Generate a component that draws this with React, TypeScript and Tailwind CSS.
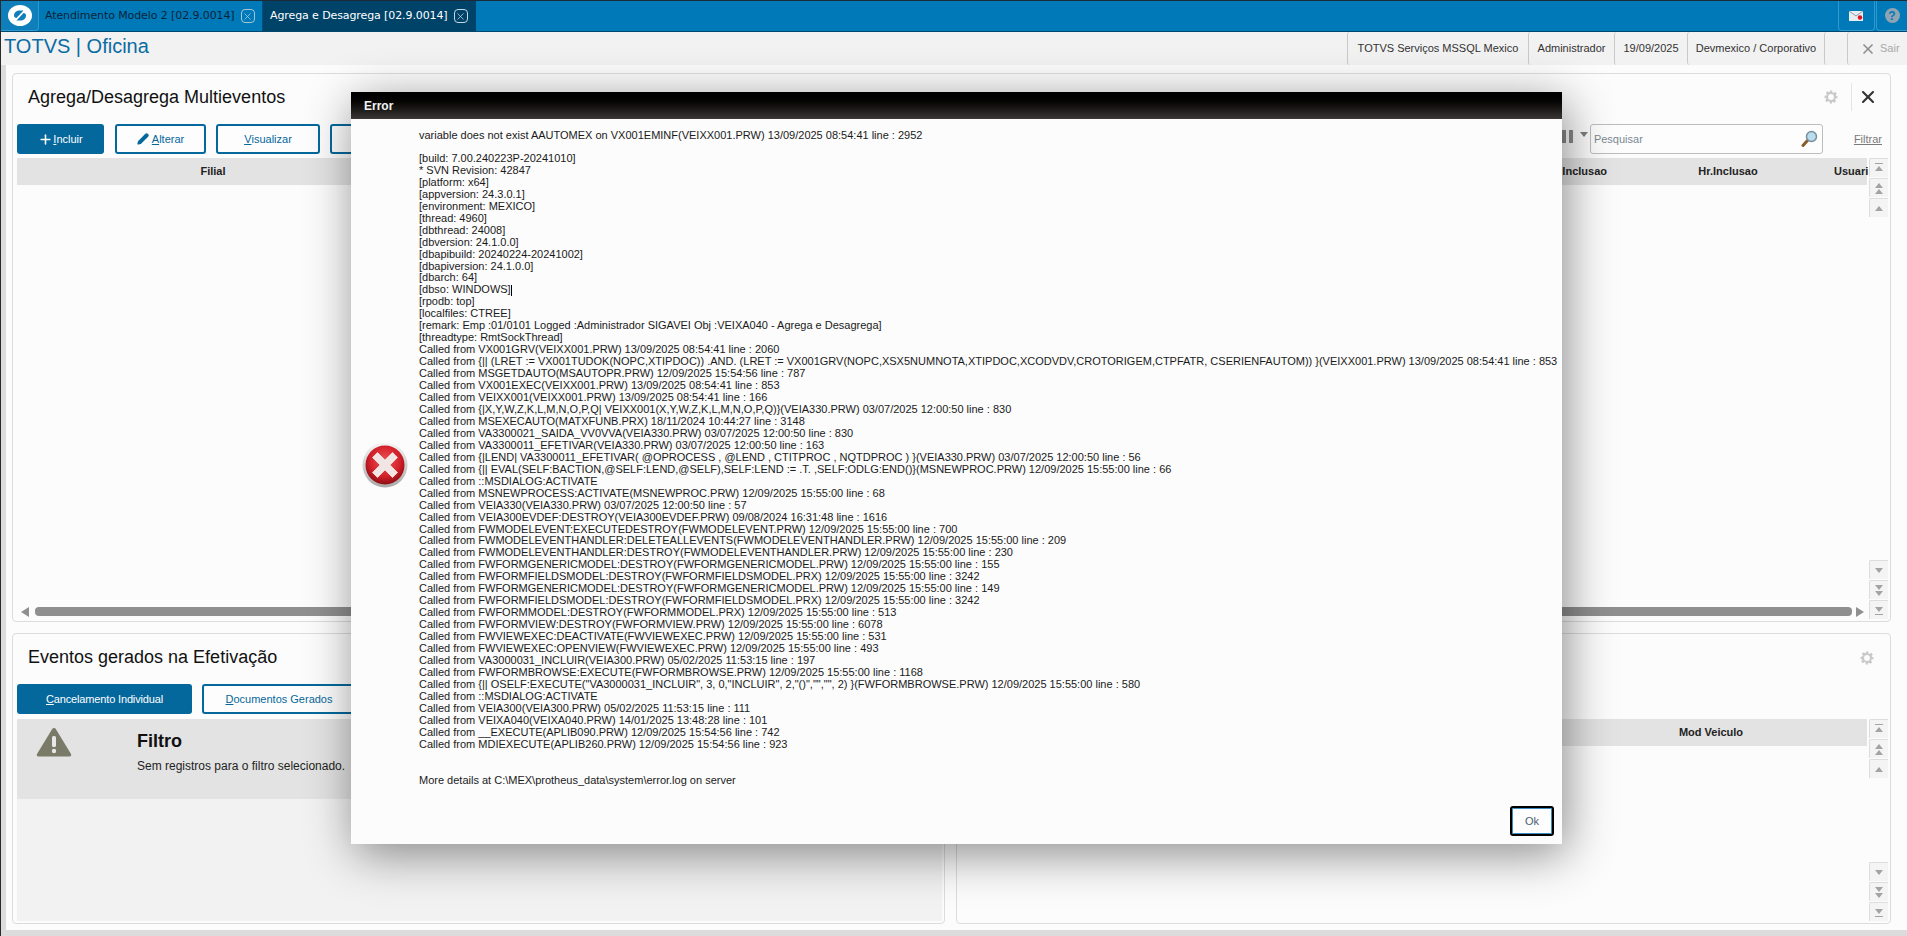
import React from "react";
import { Plus, Pencil, X } from "lucide-react";

const lines = [
  "[build: 7.00.240223P-20241010]",
  "* SVN Revision: 42847",
  "[platform: x64]",
  "[appversion: 24.3.0.1]",
  "[environment: MEXICO]",
  "[thread: 4960]",
  "[dbthread: 24008]",
  "[dbversion: 24.1.0.0]",
  "[dbapibuild: 20240224-20241002]",
  "[dbapiversion: 24.1.0.0]",
  "[dbarch: 64]",
  "[dbso: WINDOWS]",
  "[rpodb: top]",
  "[localfiles: CTREE]",
  "[remark: Emp :01/0101 Logged :Administrador SIGAVEI Obj :VEIXA040 - Agrega e Desagrega]",
  "[threadtype: RmtSockThread]",
  "Called from VX001GRV(VEIXX001.PRW) 13/09/2025 08:54:41 line : 2060",
  "Called from {|| (LRET := VX001TUDOK(NOPC,XTIPDOC)) .AND. (LRET := VX001GRV(NOPC,XSX5NUMNOTA,XTIPDOC,XCODVDV,CROTORIGEM,CTPFATR, CSERIENFAUTOM)) }(VEIXX001.PRW) 13/09/2025 08:54:41 line : 853",
  "Called from MSGETDAUTO(MSAUTOPR.PRW) 12/09/2025 15:54:56 line : 787",
  "Called from VX001EXEC(VEIXX001.PRW) 13/09/2025 08:54:41 line : 853",
  "Called from VEIXX001(VEIXX001.PRW) 13/09/2025 08:54:41 line : 166",
  "Called from {|X,Y,W,Z,K,L,M,N,O,P,Q| VEIXX001(X,Y,W,Z,K,L,M,N,O,P,Q)}(VEIA330.PRW) 03/07/2025 12:00:50 line : 830",
  "Called from MSEXECAUTO(MATXFUNB.PRX) 18/11/2024 10:44:27 line : 3148",
  "Called from VA3300021_SAIDA_VV0VVA(VEIA330.PRW) 03/07/2025 12:00:50 line : 830",
  "Called from VA3300011_EFETIVAR(VEIA330.PRW) 03/07/2025 12:00:50 line : 163",
  "Called from {|LEND| VA3300011_EFETIVAR( @OPROCESS , @LEND , CTITPROC , NQTDPROC ) }(VEIA330.PRW) 03/07/2025 12:00:50 line : 56",
  "Called from {|| EVAL(SELF:BACTION,@SELF:LEND,@SELF),SELF:LEND := .T. ,SELF:ODLG:END()}(MSNEWPROC.PRW) 12/09/2025 15:55:00 line : 66",
  "Called from ::MSDIALOG:ACTIVATE",
  "Called from MSNEWPROCESS:ACTIVATE(MSNEWPROC.PRW) 12/09/2025 15:55:00 line : 68",
  "Called from VEIA330(VEIA330.PRW) 03/07/2025 12:00:50 line : 57",
  "Called from VEIA300EVDEF:DESTROY(VEIA300EVDEF.PRW) 09/08/2024 16:31:48 line : 1616",
  "Called from FWMODELEVENT:EXECUTEDESTROY(FWMODELEVENT.PRW) 12/09/2025 15:55:00 line : 700",
  "Called from FWMODELEVENTHANDLER:DELETEALLEVENTS(FWMODELEVENTHANDLER.PRW) 12/09/2025 15:55:00 line : 209",
  "Called from FWMODELEVENTHANDLER:DESTROY(FWMODELEVENTHANDLER.PRW) 12/09/2025 15:55:00 line : 230",
  "Called from FWFORMGENERICMODEL:DESTROY(FWFORMGENERICMODEL.PRW) 12/09/2025 15:55:00 line : 155",
  "Called from FWFORMFIELDSMODEL:DESTROY(FWFORMFIELDSMODEL.PRX) 12/09/2025 15:55:00 line : 3242",
  "Called from FWFORMGENERICMODEL:DESTROY(FWFORMGENERICMODEL.PRW) 12/09/2025 15:55:00 line : 149",
  "Called from FWFORMFIELDSMODEL:DESTROY(FWFORMFIELDSMODEL.PRX) 12/09/2025 15:55:00 line : 3242",
  "Called from FWFORMMODEL:DESTROY(FWFORMMODEL.PRX) 12/09/2025 15:55:00 line : 513",
  "Called from FWFORMVIEW:DESTROY(FWFORMVIEW.PRW) 12/09/2025 15:55:00 line : 6078",
  "Called from FWVIEWEXEC:DEACTIVATE(FWVIEWEXEC.PRW) 12/09/2025 15:55:00 line : 531",
  "Called from FWVIEWEXEC:OPENVIEW(FWVIEWEXEC.PRW) 12/09/2025 15:55:00 line : 493",
  "Called from VA3000031_INCLUIR(VEIA300.PRW) 05/02/2025 11:53:15 line : 197",
  "Called from FWFORMBROWSE:EXECUTE(FWFORMBROWSE.PRW) 12/09/2025 15:55:00 line : 1168",
  'Called from {|| OSELF:EXECUTE("VA3000031_INCLUIR", 3, 0,"INCLUIR", 2,"()","","", 2) }(FWFORMBROWSE.PRW) 12/09/2025 15:55:00 line : 580',
  "Called from ::MSDIALOG:ACTIVATE",
  "Called from VEIA300(VEIA300.PRW) 05/02/2025 11:53:15 line : 111",
  "Called from VEIXA040(VEIXA040.PRW) 14/01/2025 13:48:28 line : 101",
  "Called from __EXECUTE(APLIB090.PRW) 12/09/2025 15:54:56 line : 742",
  "Called from MDIEXECUTE(APLIB260.PRW) 12/09/2025 15:54:56 line : 923",
];

function Logo() {
  return (
    <svg width="24" height="21" viewBox="0 0 24 21" fill="none">
      <ellipse cx="12" cy="10.500" rx="12" ry="10.500" fill="#ffffff" />
      <path d="M6 10.500C6 7.500 8.500 5.500 12 5.500h3.500L8.500 13C7 12.800 6 11.800 6 10.500z" fill="#0f7fbb" />
      <path d="M18 10.500c0 3-2.500 5-6 5H8.500L15.500 8c1.500.2 2.500 1.200 2.500 2.500z" fill="#0f7fbb" />
    </svg>
  );
}

function TabClose({ light }: { light?: boolean }) {
  return (
    <span className={`ml-[6px] flex h-[14px] w-[14px] items-center justify-center rounded-[4px] border ${light ? "border-[#c8d8e4]" : "border-[#a5c6da]"}`}>
      <X size={11} strokeWidth={1.5} className={light ? "text-[#d5e2ec]" : "text-[#bcd6e6]"} />
    </span>
  );
}

function Gear({ className }: { className?: string }) {
  return (
    <svg width="14" height="14" viewBox="0 0 24 24" className={className}>
      <path
        fillRule="evenodd"
        fill="#c9c9c9"
        d="M10 1h4l.6 3.200 1.800.8 2.700-1.800 2.800 2.800-1.800 2.700.8 1.800L23 10v4l-3.200.6-.8 1.800 1.800 2.700-2.800 2.800-2.700-1.800-1.800.8L14 23h-4l-.6-3.200-1.800-.8-2.700 1.800-2.800-2.800 1.800-2.700-.8-1.800L1 14v-4l3.200-.6.8-1.800-1.800-2.700 2.800-2.800 2.700 1.800 1.800-.8L10 1zm2 6a5 5 0 100 10 5 5 0 000-10z"
      />
    </svg>
  );
}

function Arrow({ dir, kind }: { dir: "up" | "down"; kind: "end" | "double" | "single" }) {
  const tri = (y: number) => (dir === "up" ? `M6 ${y}l4 5H2z` : `M2 ${y}h8l-4 5z`);
  let d = "";
  if (kind === "single") d = tri(5);
  if (kind === "double") d = tri(2) + tri(8);
  if (kind === "end") d = dir === "up" ? "M2 2h8v1H2z" + tri(5) : tri(4) + "M2 11h8v1H2z";
  return (
    <div className="flex h-[19px] w-[19px] items-center justify-center rounded-tl-[2px] border-t border-l border-[#dddddd] bg-[#f4f4f4]">
      <svg width="12" height="14" viewBox="0 0 12 14">
        <path d={d} fill="#a3a3a3" />
      </svg>
    </div>
  );
}

function ScrollColumn() {
  return (
    <div className="flex w-[19px] flex-col justify-between">
      <div className="flex flex-col gap-[1px]">
        <Arrow dir="up" kind="end" />
        <Arrow dir="up" kind="double" />
        <Arrow dir="up" kind="single" />
      </div>
      <div className="flex flex-col gap-[1px]">
        <Arrow dir="down" kind="single" />
        <Arrow dir="down" kind="double" />
        <Arrow dir="down" kind="end" />
      </div>
    </div>
  );
}

function OutlineBtn({ w, children }: { w: string; children: React.ReactNode }) {
  return (
    <button className={`flex h-[30px] items-center justify-center rounded-[3px] border-2 border-[#05689c] bg-[#fdfdfd] text-[11px] text-[#05689c] ${w}`}>
      {children}
    </button>
  );
}

function HeaderCell({ children, w }: { children: React.ReactNode; w: string }) {
  return (
    <div className={`flex h-full items-center justify-center rounded-l-[3px] border-l border-[#c9c9c9] ${w}`}>
      {children}
    </div>
  );
}

function ErrorIcon() {
  return (
    <svg width="46" height="46" viewBox="0 0 46 46">
      <defs>
        <radialGradient id="redg" cx="50%" cy="40%" r="60%">
          <stop offset="0%" stopColor="#f0565a" />
          <stop offset="65%" stopColor="#d3202a" />
          <stop offset="100%" stopColor="#8e0d14" />
        </radialGradient>
        <linearGradient id="ringg" x1="0" y1="0" x2="0" y2="1">
          <stop offset="0%" stopColor="#f5f5f5" />
          <stop offset="100%" stopColor="#a9a9a9" />
        </linearGradient>
      </defs>
      <circle cx="23" cy="23" r="22.500" fill="url(#ringg)" />
      <circle cx="23" cy="23" r="19.500" fill="url(#redg)" />
      <path d="M15.500 10.500L23 18l7.500-7.500 5 5L28 23l7.500 7.500-5 5L23 28l-7.500 7.500-5-5L18 23l-7.500-7.500z" fill="#f1e6e4" stroke="#e9cfcc" strokeWidth="1" strokeLinejoin="round" />
    </svg>
  );
}

export default function App() {
  return (
    <div className="relative flex h-[936px] w-[1907px] flex-col overflow-hidden border-l border-[#2a2a2a] bg-[#dcdcdc] font-['Liberation_Sans',Arial,sans-serif] text-[12px] text-[#111111]">
      {/* top bar */}
      <div className="flex h-[32px] shrink-0 items-stretch border-t border-b border-t-[#1b2a36] border-b-[#00486f] bg-[#0079b8]">
        <div className="flex w-[38px] items-center justify-center rounded-br-[4px] border-r border-b border-[#2f9ad0] bg-[#0f7fbb]">
          <Logo />
        </div>
        <div className="flex w-[224px] items-center border-r border-[#00507c] pl-[6px] font-['DejaVu_Sans',sans-serif] text-[11px] tracking-[-0.1px] text-[#0a2538]">
          Atendimento Modelo 2 [02.9.0014]
          <TabClose />
        </div>
        <div className="flex w-[213px] items-center bg-[#004369] pl-[7px] font-['DejaVu_Sans',sans-serif] text-[11px] tracking-[-0.1px] text-white">
          Agrega e Desagrega [02.9.0014]
          <TabClose light />
        </div>
        <div className="flex-1" />
        <div className="flex w-[37px] items-center justify-center rounded-b-[4px] border-x border-b border-[#2f9ad0]">
          <svg width="15" height="12" viewBox="0 0 15 12">
            <rect x="0" y="1" width="14" height="10" fill="#e8edf2" />
            <path d="M0 1l7 5 7-5" fill="none" stroke="#8b9db0" strokeWidth="1" />
            <circle cx="11" cy="7.500" r="2.200" fill="#e3101c" />
          </svg>
        </div>
        <div className="ml-[1px] flex w-[31px] items-center justify-center rounded-bl-[4px] border-l border-b border-[#2f9ad0]">
          <span className="flex h-[15px] w-[15px] items-center justify-center rounded-full bg-[#8fa4b3] text-[12px] font-bold text-[#0079b8]">?</span>
        </div>
      </div>

      {/* header */}
      <div className="flex h-[33px] shrink-0 items-center bg-[#f2f2f2] pl-[3px]">
        <div className="flex-1 pb-[6px] text-[20px] leading-[24px] text-[#0a6ca3]">TOTVS | Oficina</div>
        <div className="flex h-full items-stretch text-[11px] text-[#333333]">
          <HeaderCell w="w-[181px]">TOTVS Serviços MSSQL Mexico</HeaderCell>
          <HeaderCell w="w-[86px]">Administrador</HeaderCell>
          <HeaderCell w="w-[73px]">19/09/2025</HeaderCell>
          <HeaderCell w="w-[137px]">Devmexico / Corporativo</HeaderCell>
          <div className="flex w-[23px] rounded-l-[3px] border-l border-[#c9c9c9]" />
          <div className="flex h-full w-[60px] items-center rounded-l-[3px] border-l border-[#c9c9c9] pl-[12px] text-[#a8a8a8]">
            <X size={16} strokeWidth={2.5} className="mr-[4px] text-[#8d8d8d]" />
            Sair
          </div>
        </div>
      </div>

      {/* content */}
      <div className="ml-[5px] flex h-[865px] shrink-0 flex-col gap-[11px] bg-[#fcfcfc] pl-[6px] pr-[16px] pt-[8px]">
        {/* card 1 */}
        <div className="flex h-[549px] flex-col rounded-[4px] border border-[#dcdcdc] bg-[#fcfcfc]">
          <div className="flex h-[50px] shrink-0 items-center justify-between pb-[4px] pl-[15px] pr-[12px]">
            <span className="text-[18px] text-[#111111]">Agrega/Desagrega Multieventos</span>
            <div className="flex items-center">
              <Gear />
              <div className="ml-[13px] mr-[6px] h-[28px] w-[1px] bg-[#e5e5e5]" />
              <X size={20} strokeWidth={2.5} className="text-[#333333]" />
            </div>
          </div>
          <div className="flex h-[30px] shrink-0 items-center pl-[4px] pr-[8px]">
            <button className="flex h-[30px] w-[87px] items-center justify-center rounded-[3px] bg-[#05689c] text-[11px] text-white">
              <Plus size={15} strokeWidth={2.5} />
              <span className="underline decoration-[1px]">I</span>ncluir
            </button>
            <div className="ml-[11px]">
              <OutlineBtn w="w-[91px]">
                <Pencil size={12} strokeWidth={2.5} className="mr-[3px] fill-[#05689c]" />
                <span className="underline">A</span>lterar
              </OutlineBtn>
            </div>
            <div className="ml-[10px]">
              <OutlineBtn w="w-[104px]">
                <span className="underline">V</span>isualizar
              </OutlineBtn>
            </div>
            <div className="ml-[10px]">
              <OutlineBtn w="w-[104px]">Outros</OutlineBtn>
            </div>
            <div className="flex-1" />
            <svg width="32" height="20" viewBox="0 0 32 20" className="mb-[5px] mr-[1px]">
              <rect x="5" y="3" width="4" height="13" fill="#8a8a8a" />
              <rect x="12" y="3" width="4" height="13" fill="#8a8a8a" />
              <path d="M23 5h8l-4 5z" fill="#7f7f7f" />
            </svg>
            <div className="flex h-[30px] w-[233px] items-center justify-between rounded-[3px] border border-[#bdbdbd] bg-[#fdfdfd] pl-[3px] pr-[3px] text-[11px] text-[#7b8a94]">
              Pesquisar
              <svg width="18" height="18" viewBox="0 0 18 18">
                <path d="M6.500 10.500L2 15.500" stroke="#8a5a2a" strokeWidth="3" strokeLinecap="round" />
                <circle cx="10.500" cy="6.500" r="5" fill="#b9dcee" stroke="#7a8f9c" strokeWidth="1.500" />
              </svg>
            </div>
            <span className="ml-[31px] text-[11px] text-[#7a7a7a] underline">Filtrar</span>
          </div>
          <div className="mt-[4px] flex min-h-0 flex-1 pb-[2px] pl-[4px] pr-[2px]">
            <div className="flex min-w-0 flex-1 flex-col">
              <div className="grid h-[27px] shrink-0 grid-cols-[392px_1fr_212px_33px] items-center bg-[#e3e3e3] text-[11px] font-bold text-[#222222]">
                <span className="text-center">Filial</span>
                <span className="pr-[15px] text-right">Dt.Inclusao</span>
                <span className="text-center">Hr.Inclusao</span>
                <span className="whitespace-nowrap">Usuari</span>
              </div>
              <div className="flex-1" />
              <div className="flex h-[15px] shrink-0 items-center pl-[4px] pr-[3px]">
                <svg width="8" height="10" viewBox="0 0 8 10"><path d="M8 0v10L0 5z" fill="#8f8f8f" /></svg>
                <div className="ml-[6px] h-[9px] flex-1 rounded-[4px] bg-[#8f8f8f]" />
                <svg width="8" height="10" viewBox="0 0 8 10" className="ml-[4px]"><path d="M0 0v10l8-5z" fill="#8f8f8f" /></svg>
              </div>
            </div>
            <div className="ml-[2px] flex">
              <ScrollColumn />
            </div>
          </div>
        </div>

        {/* lower row */}
        <div className="flex h-[291px] gap-[11px]">
          <div className="flex w-[933px] flex-col rounded-[4px] border border-[#dcdcdc] bg-[#fcfcfc]">
            <div className="flex h-[50px] shrink-0 items-center pb-[4px] pl-[15px]">
              <span className="text-[18px] text-[#111111]">Eventos gerados na Efetivação</span>
            </div>
            <div className="flex h-[30px] shrink-0 items-center gap-[10px] pl-[4px]">
              <button className="flex h-[30px] w-[175px] items-center justify-center rounded-[3px] bg-[#05689c] text-[11px] tracking-[-0.15px] text-white">
                <span className="underline">C</span>ancelamento Individual
              </button>
              <OutlineBtn w="w-[154px]">
                <span className="underline">D</span>ocumentos Gerados
              </OutlineBtn>
            </div>
            <div className="mb-[2px] ml-[4px] mr-[2px] mt-[5px] flex min-h-0 flex-1 flex-col bg-[#f2f2f2]">
              <div className="flex h-[80px] shrink-0 bg-[#e3e3e3]">
                <svg width="36" height="30" viewBox="0 0 36 30" className="ml-[19px] mt-[8px] shrink-0">
                  <path d="M18 1c.8 0 1.400.4 1.800 1L35 27c.6 1.200 0 2.500-1.500 2.500H2.500C1 29.500.4 28.200 1 27L16.200 2c.4-.6 1-1 1.800-1z" fill="#7a7a68" />
                  <rect x="16" y="9" width="4" height="11" rx="1.500" fill="#e8e8e8" />
                  <circle cx="18" cy="24" r="2.200" fill="#e8e8e8" />
                </svg>
                <div className="ml-[65px] flex flex-col">
                  <span className="mt-[11px] text-[18px] font-bold leading-[22px] text-[#111111]">Filtro</span>
                  <span className="mt-[7px] text-[12px] leading-[14px] text-[#222222]">Sem registros para o filtro selecionado.</span>
                </div>
              </div>
            </div>
          </div>

          <div className="flex min-w-0 flex-1 flex-col rounded-[4px] border border-[#dcdcdc] bg-[#fcfcfc]">
            <div className="flex h-[50px] shrink-0 items-center justify-end pb-[2px] pr-[16px]">
              <Gear />
            </div>
            <div className="h-[35px] shrink-0" />
            <div className="flex min-h-0 flex-1 pb-[2px] pr-[2px]">
              <div className="min-w-0 flex-1">
                <div className="flex h-[27px] items-center bg-[#e3e3e3] text-[11px] font-bold text-[#222222]">
                  <span className="ml-[664px] w-[180px] text-center">Mod Veiculo</span>
                </div>
              </div>
              <div className="ml-[2px] flex">
                <ScrollColumn />
              </div>
            </div>
          </div>
        </div>
      </div>

      {/* dialog */}
      <div className="absolute left-[350px] top-[92px] flex h-[752px] w-[1211px] flex-col bg-[#fcfcfc] shadow-[4px_10px_45px_rgba(0,0,0,0.45)]">
        <div className="flex h-[27px] shrink-0 items-center bg-gradient-to-b from-[#000000] to-[#3b3734] pl-[13px] text-[12px] font-bold text-[#f2f2f2]">
          Error
        </div>
        <div className="flex min-h-0 flex-1 pl-[11px]">
          <div className="flex w-[57px] shrink-0 items-center pt-[4px]">
            <ErrorIcon />
          </div>
          <div className="min-w-0 flex-1 pt-[11px] text-[11px] leading-[11.96px] whitespace-pre text-[#1a1a1a]">
            <div>variable does not exist AAUTOMEX on VX001EMINF(VEIXX001.PRW) 13/09/2025 08:54:41 line : 2952</div>
            <div className="h-[11px]" />
            {lines.map((l, i) => (
              <div key={i}>
                {l}
                {l === "[dbso: WINDOWS]" && <span className="inline-block h-[11px] w-[1px] bg-black align-middle" />}
              </div>
            ))}
            <div className="h-[24px]" />
            <div>More details at C:\MEX\protheus_data\system\error.log on server</div>
          </div>
        </div>
        <div className="flex h-[38px] shrink-0 items-start justify-end pr-[8px]">
          <button className="flex h-[30px] w-[44px] items-center justify-center rounded-[3px] border-2 border-black bg-[#fdfdfd] text-[11px] text-[#4a6070] shadow-[inset_0_0_0_1px_#3b8ac0]">
            Ok
          </button>
        </div>
      </div>
    </div>
  );
}
